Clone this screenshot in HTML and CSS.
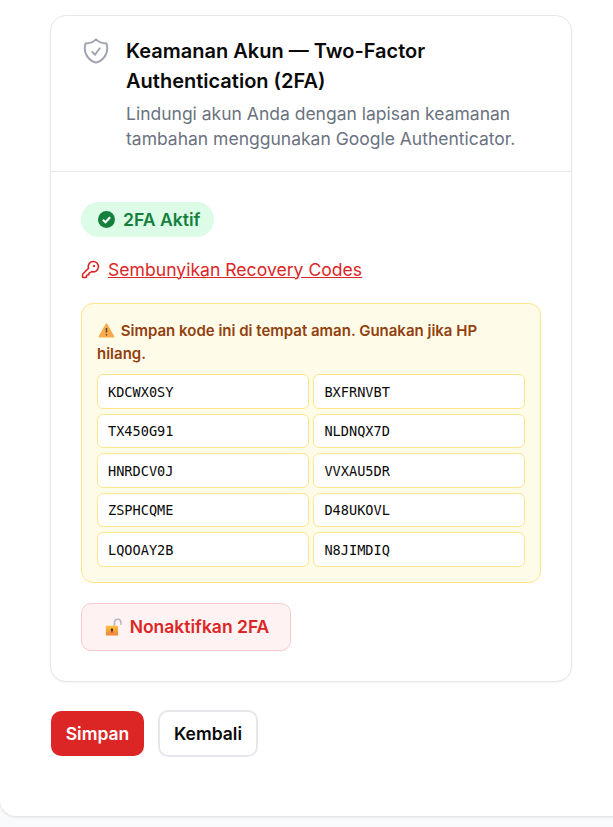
FILE: index.html
```html
<!DOCTYPE html>
<html lang="en">
<head>
  <meta charset="UTF-8">
  <title>Keamanan Akun</title>
  <meta name="viewport" content="width=device-width, initial-scale=1.0">
  <link rel="stylesheet" href="styles.css">
</head>
<body>
  <div class="panel">
    <div class="card">

      <!-- Card header -->
      <div class="card-head">
        <svg class="shield" viewBox="0 0 24 24" fill="none" stroke="#9ca3af" stroke-width="1.5" stroke-linecap="round" stroke-linejoin="round">
          <path d="M9 12.75 11.25 15 15 9.75m-3-7.036A11.959 11.959 0 0 1 3.598 6 11.99 11.99 0 0 0 3 9.749c0 5.592 3.824 10.29 9 11.623 5.176-1.332 9-6.03 9-11.622 0-1.31-.21-2.571-.598-3.751h-.152c-3.196 0-6.1-1.248-8.25-3.285Z"/>
        </svg>
        <div>
          <h2>Keamanan Akun — Two-Factor Authentication (2FA)</h2>
          <p>Lindungi akun Anda dengan lapisan keamanan tambahan menggunakan Google Authenticator.</p>
        </div>
      </div>

      <!-- Card body -->
      <div class="card-body">
        <div class="badge">
          <svg viewBox="0 0 16 16" class="badge-icon">
            <circle cx="8" cy="8" r="8" fill="#15803d"/>
            <path d="M4.6 8.2 L7 10.5 L11.4 5.9" fill="none" stroke="#fff" stroke-width="2"/>
          </svg>
          2FA Aktif
        </div>

        <a class="toggle" href="#codes">
          <svg viewBox="0 0 24 24" class="key" fill="none" stroke="#dc2626" stroke-width="2" stroke-linecap="round" stroke-linejoin="round">
            <path d="M2.586 17.414A2 2 0 0 0 2 18.828V21a1 1 0 0 0 1 1h3a1 1 0 0 0 1-1v-1a1 1 0 0 1 1-1h1a1 1 0 0 0 1-1v-1a1 1 0 0 1 1-1h.172a2 2 0 0 0 1.414-.586l.814-.814a6.5 6.5 0 1 0-4-4z"/>
            <circle cx="16.5" cy="7.5" r=".5" fill="#dc2626"/>
          </svg>
          <span>Sembunyikan Recovery Codes</span>
        </a>

        <div class="codes" id="codes">
          <p class="warn">
            <svg viewBox="0 0 20 18" class="warn-icon">
              <path d="M10 1.5 L18.5 16.5 H1.5 Z" fill="#f8ab4a" stroke="#f8ab4a" stroke-width="2" stroke-linejoin="round"/>
              <path d="M10 6 V11.5" stroke="#5b4630" stroke-width="1.8"/>
              <circle cx="10" cy="14.2" r="1" fill="#5b4630"/>
            </svg>
            Simpan kode ini di tempat aman. Gunakan jika HP hilang.
          </p>
          <div class="code-grid">
            <div class="code">KDCWX0SY</div>
            <div class="code">BXFRNVBT</div>
            <div class="code">TX450G91</div>
            <div class="code">NLDNQX7D</div>
            <div class="code">HNRDCV0J</div>
            <div class="code">VVXAU5DR</div>
            <div class="code">ZSPHCQME</div>
            <div class="code">D48UKOVL</div>
            <div class="code">LQOOAY2B</div>
            <div class="code">N8JIMDIQ</div>
          </div>
        </div>

        <button class="btn-off" type="button">
          <svg viewBox="0 0 20 20" class="lock">
            <defs>
              <linearGradient id="lockFill" x1="0" y1="0" x2="0" y2="1">
                <stop offset="0" stop-color="#fcc23e"/>
                <stop offset="1" stop-color="#f0813a"/>
              </linearGradient>
            </defs>
            <path d="M10.5 9 V5 A3.6 3.6 0 0 1 17.7 5 V7.5" fill="none" stroke="#b9b6c6" stroke-width="1.8"/>
            <rect x="1" y="8.5" width="13.5" height="11" rx="1" fill="url(#lockFill)"/>
            <circle cx="7.7" cy="13" r="1.3" fill="#3b2a20"/>
            <rect x="7.1" y="13" width="1.2" height="3.2" fill="#3b2a20"/>
          </svg>
          Nonaktifkan 2FA
        </button>
      </div>
    </div>

    <div class="actions">
      <button class="btn btn-save" type="button">Simpan</button>
      <button class="btn btn-back" type="button">Kembali</button>
    </div>
  </div>
</body>
</html>
```

FILE: styles.css
```css
/* Reset and Basic Styles */
* {
  margin: 0;
  padding: 0;
  box-sizing: border-box;
  font-family: 'Inter', sans-serif;
}

html, body {
  height: 100%;
  overflow: hidden;
  background-color: #f9fafb;
}

/* Outer white panel */
.panel {
  height: 816px;
  margin-right: -20px;
  padding: 15px 61px 0 50px;
  background: #fff;
  border-bottom-left-radius: 16px;
  box-shadow: 0 1px 3px rgba(0, 0, 0, 0.12);
}

/* Card */
.card {
  height: 667px;
  background: #fff;
  border: 1px solid #e5e7eb;
  border-radius: 16px;
  box-shadow: 0 1px 2px rgba(0, 0, 0, 0.05);
}

.card-head {
  display: flex;
  gap: 15px;
  height: 156px;
  padding: 20px 30px 0;
  border-bottom: 1px solid #e5e7eb;
}

.shield {
  width: 30px;
  height: 30px;
  flex-shrink: 0;
}

.card-head h2 {
  font-size: 20px;
  font-weight: 600;
  line-height: 30px;
  color: #0a0a0a;
}

.card-head p {
  margin-top: 5px;
  font-size: 17.5px;
  line-height: 25px;
  color: #6b7280;
}

.card-body {
  padding: 30px 30px 0;
}

/* Status badge */
.badge {
  display: inline-flex;
  align-items: center;
  gap: 8px;
  height: 35px;
  padding: 0 14px 0 17px;
  border-radius: 18px;
  background: #dcfce7;
  color: #15803d;
  font-size: 17.6px;
  font-weight: 600;
}

.badge-icon {
  width: 17px;
  height: 17px;
}

/* Recovery codes toggle */
.toggle {
  display: flex;
  align-items: center;
  gap: 8px;
  margin-top: 20px;
  height: 24px;
  color: #dc2626;
  font-size: 17.6px;
}

.toggle span {
  text-decoration: underline;
}

.key {
  width: 19px;
  height: 19px;
}

/* Recovery codes box */
.codes {
  margin-top: 22px;
  padding: 15px;
  background: #fefce8;
  border: 1px solid #fde68a;
  border-radius: 12px;
}

.warn {
  font-size: 15px;
  font-weight: 600;
  line-height: 23px;
  color: #92400e;
}

.warn-icon {
  width: 17px;
  height: 15px;
  vertical-align: -2px;
  margin-left: 1px;
  margin-right: 2px;
}

.code-grid {
  display: grid;
  grid-template-columns: 1fr 1fr;
  gap: 4.8px;
  margin-top: 9.3px;
}

.code {
  height: 34.7px;
  padding-left: 10px;
  display: flex;
  align-items: center;
  background: #fff;
  border: 1px solid #fde68a;
  border-radius: 6px;
  font-family: 'DejaVu Sans Mono', monospace;
  font-size: 13.6px;
  color: #0a0a0a;
}

/* Buttons */
.btn-off {
  display: flex;
  align-items: center;
  justify-content: center;
  gap: 7px;
  margin-top: 19.7px;
  width: 210px;
  height: 48px;
  padding-left: 2px;
  background: #fef2f2;
  border: 1px solid #fecaca;
  border-radius: 10px;
  color: #dc2626;
  font-size: 17.5px;
  font-weight: 600;
}

.lock {
  width: 18px;
  height: 18px;
}

.actions {
  display: flex;
  align-items: center;
  gap: 14px;
  margin-top: 28px;
  margin-left: 1px;
}

.btn {
  height: 45px;
  border-radius: 10px;
  font-size: 17.5px;
  font-weight: 600;
}

.btn-save {
  width: 93px;
  background: #dc2626;
  border: none;
  color: #fff;
}

.btn-back {
  width: 100px;
  height: 47px;
  background: #fff;
  border: 2px solid #e5e7eb;
  color: #0a0a0a;
}
```
